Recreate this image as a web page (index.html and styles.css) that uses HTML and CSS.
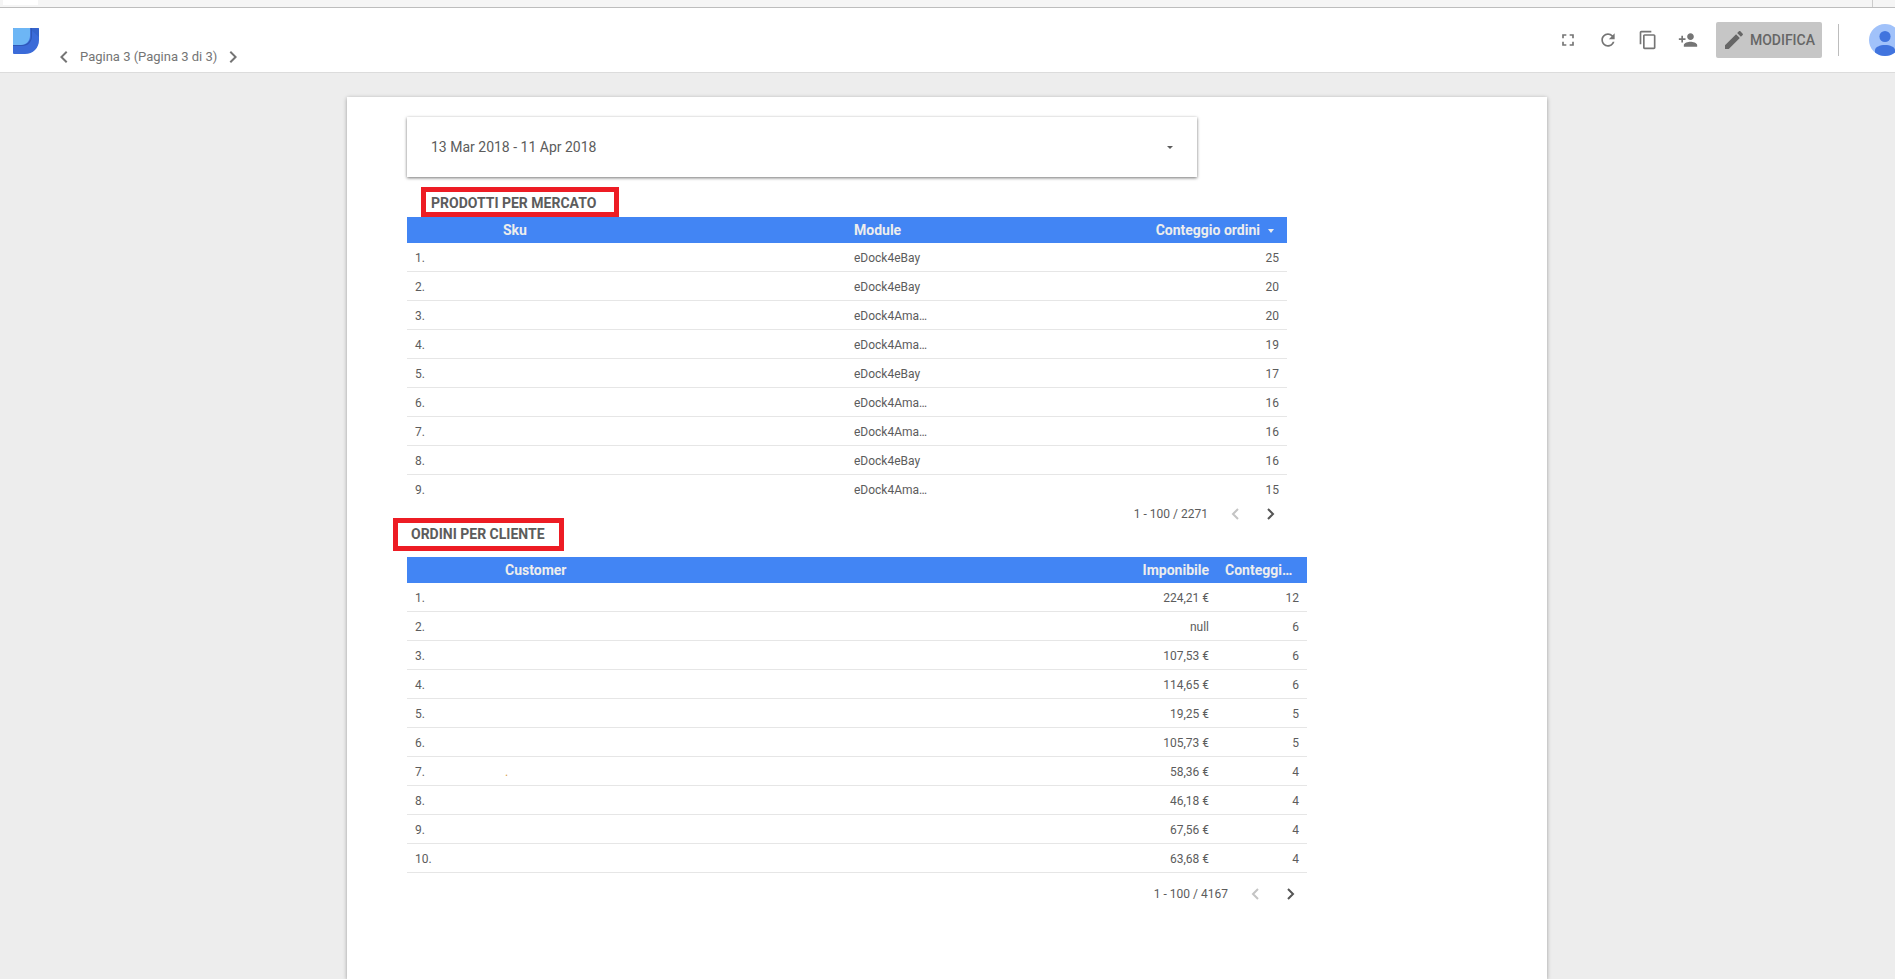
FILE: index.html
```html
<!DOCTYPE html>
<html lang="it">
<head>
<meta charset="utf-8">
<title>Report - Pagina 3</title>
<link rel="stylesheet" href="styles.css">
</head>
<body>
<div class="app">
  <div class="tab-strip"><span class="tab-strip-active"></span><span class="tab-strip-end"></span></div>
  <header class="header">
    <svg class="logo" viewBox="0 0 26 26" aria-hidden="true">
      <path d="M1 0h24a1 1 0 0 1 1 1v11c0 8-6 14-14 14H1a1 1 0 0 1-1-1V1a1 1 0 0 1 1-1z" fill="#3b6bd8"/>
      <path d="M17 1l9 8V1a1 1 0 0 0-1-1h-8z" fill="#3564cc"/>
      <path d="M0 17h9c5 0 9-4 9-9V0h1v8c0 6-4 10-10 10H0z" fill="#2f57b8"/>
      <path d="M1 0h16v8c0 5-4 9-9 9H0V1a1 1 0 0 1 1-1z" fill="#6db6f5"/>
    </svg>
    <nav class="page-nav" aria-label="Pagine">
      <button class="nav-button" type="button" aria-label="Pagina precedente"><svg class="icon" viewBox="0 0 24 24"><path d="M15.41 7.41L14 6l-6 6 6 6 1.410-1.410L10.830 12z"/></svg></button>
      <span>Pagina 3 (Pagina 3 di 3)</span>
      <button class="nav-button" type="button" aria-label="Pagina successiva"><svg class="icon" viewBox="0 0 24 24"><path d="M10 6L8.590 7.410 13.170 12l-4.580 4.590L10 18l6-6z"/></svg></button>
    </nav>
    <div class="toolbar">
      <button class="tool" type="button" aria-label="Schermo intero"><svg class="icon" viewBox="0 0 24 24"><path d="M7 14H5v5h5v-2H7v-3zm-2-4h2V7h3V5H5v5zm12 7h-3v2h5v-5h-2v3zM14 5v2h3v3h2V5h-5z"/></svg></button>
      <button class="tool" type="button" aria-label="Aggiorna"><svg class="icon" viewBox="0 0 24 24"><path d="M17.650 6.350C16.200 4.900 14.210 4 12 4c-4.420 0-7.990 3.580-7.990 8s3.570 8 7.990 8c3.730 0 6.840-2.550 7.730-6h-2.080c-.82 2.330-3.040 4-5.650 4-3.310 0-6-2.690-6-6s2.690-6 6-6c1.660 0 3.140.69 4.220 1.780L13 11h7V4l-2.350 2.350z"/></svg></button>
      <button class="tool" type="button" aria-label="Crea copia"><svg class="icon" viewBox="0 0 24 24"><path d="M16 1H4c-1.100 0-2 .9-2 2v14h2V3h12V1zm3 4H8c-1.100 0-2 .9-2 2v14c0 1.100.9 2 2 2h11c1.100 0 2-.9 2-2V7c0-1.100-.9-2-2-2zm0 16H8V7h11v14z"/></svg></button>
      <button class="tool" type="button" aria-label="Condividi"><svg class="icon" viewBox="0 0 24 24"><path d="M15 12c2.210 0 4-1.790 4-4s-1.790-4-4-4-4 1.790-4 4 1.790 4 4 4zm-9-2V7H4v3H1v2h3v3h2v-3h3v-2H6zm9 4c-2.670 0-8 1.340-8 4v2h16v-2c0-2.660-5.330-4-8-4z"/></svg></button>
      <button class="edit-button" type="button"><svg class="icon-large" viewBox="0 0 24 24"><path d="M3 17.250V21h3.750L17.810 9.940l-3.750-3.750L3 17.250zM20.710 7.040c.39-.39.39-1.020 0-1.410l-2.340-2.340c-.39-.39-1.020-.39-1.410 0l-1.830 1.830 3.750 3.750 1.830-1.830z"/></svg>MODIFICA</button>
      <span class="divider"></span>
      <svg class="avatar" viewBox="0 0 32 32" role="img" aria-label="Account">
        <circle cx="16" cy="16" r="16" fill="#a1c2fa"/>
        <circle cx="16" cy="12.500" r="5.600" fill="#4174de"/>
        <path d="M6 28.500V26c0-3 5-5 10-5s10 2 10 5v2.500C23 31 19.500 32 16 32S9 31 6 28.500z" fill="#4174de"/>
      </svg>
    </div>
  </header>

  <main class="stage">
    <article class="sheet">
      <button class="date-range" type="button"><span>13 Mar 2018 - 11 Apr 2018</span><svg class="date-caret" viewBox="0 0 6 3"><path d="M0 0h6L3 3z"/></svg></button>

      <section class="products">
        <h2 class="title title-products">PRODOTTI PER MERCATO</h2>
        <div class="table-clip">
          <table class="data">
            <colgroup><col class="col-index"><col class="col-sku"><col class="col-module"><col></colgroup>
            <thead><tr><th></th><th>Sku</th><th>Module</th><th class="num">Conteggio ordini<svg class="sort-caret" viewBox="0 0 6 4"><path d="M0 0h6L3 4z"/></svg></th></tr></thead>
            <tbody>
              <tr><td>1.</td><td></td><td>eDock4eBay</td><td class="num">25</td></tr>
              <tr><td>2.</td><td></td><td>eDock4eBay</td><td class="num">20</td></tr>
              <tr><td>3.</td><td></td><td>eDock4Ama…</td><td class="num">20</td></tr>
              <tr><td>4.</td><td></td><td>eDock4Ama…</td><td class="num">19</td></tr>
              <tr><td>5.</td><td></td><td>eDock4eBay</td><td class="num">17</td></tr>
              <tr><td>6.</td><td></td><td>eDock4Ama…</td><td class="num">16</td></tr>
              <tr><td>7.</td><td></td><td>eDock4Ama…</td><td class="num">16</td></tr>
              <tr><td>8.</td><td></td><td>eDock4eBay</td><td class="num">16</td></tr>
              <tr><td>9.</td><td></td><td>eDock4Ama…</td><td class="num">15</td></tr>
            </tbody>
          </table>
        </div>
        <div class="pager">
          <span>1 - 100 / 2271</span>
          <button class="pager-button" type="button" aria-label="Precedente" disabled><svg viewBox="0 0 8 12"><path d="M7 1L2 6l5 5"/></svg></button>
          <button class="pager-button" type="button" aria-label="Successivo"><svg viewBox="0 0 8 12"><path d="M1 1l5 5-5 5"/></svg></button>
        </div>
      </section>

      <section class="orders">
        <h2 class="title title-orders">ORDINI PER CLIENTE</h2>
        <table class="data">
          <colgroup><col class="col-index-wide"><col><col class="col-amount"><col class="col-count"></colgroup>
          <thead><tr><th></th><th>Customer</th><th class="num">Imponibile</th><th>Conteggi…</th></tr></thead>
          <tbody>
            <tr><td>1.</td><td></td><td class="num">224,21 €</td><td class="num">12</td></tr>
            <tr><td>2.</td><td></td><td class="num">null</td><td class="num">6</td></tr>
            <tr><td>3.</td><td></td><td class="num">107,53 €</td><td class="num">6</td></tr>
            <tr><td>4.</td><td></td><td class="num">114,65 €</td><td class="num">6</td></tr>
            <tr><td>5.</td><td></td><td class="num">19,25 €</td><td class="num">5</td></tr>
            <tr><td>6.</td><td></td><td class="num">105,73 €</td><td class="num">5</td></tr>
            <tr><td>7.</td><td class="faint">.</td><td class="num">58,36 €</td><td class="num">4</td></tr>
            <tr><td>8.</td><td></td><td class="num">46,18 €</td><td class="num">4</td></tr>
            <tr><td>9.</td><td></td><td class="num">67,56 €</td><td class="num">4</td></tr>
            <tr><td>10.</td><td></td><td class="num">63,68 €</td><td class="num">4</td></tr>
          </tbody>
        </table>
        <div class="pager pager-spaced">
          <span>1 - 100 / 4167</span>
          <button class="pager-button" type="button" aria-label="Precedente" disabled><svg viewBox="0 0 8 12"><path d="M7 1L2 6l5 5"/></svg></button>
          <button class="pager-button" type="button" aria-label="Successivo"><svg viewBox="0 0 8 12"><path d="M1 1l5 5-5 5"/></svg></button>
        </div>
      </section>
    </article>
  </main>
</div>
</body>
</html>
```
FILE: styles.css
```css
* { box-sizing: border-box; }

body {
  margin: 0;
  background: #ededed;
  color: #5c5c5c;
  font-family: Roboto, "Liberation Sans", sans-serif;
  font-size: 12px;
}

button {
  display: flex;
  align-items: center;
  margin: 0;
  padding: 0;
  border: 0;
  background: none;
  color: inherit;
  font: inherit;
  cursor: pointer;
}

svg { display: block; flex: none; }

.app {
  display: flex;
  flex-direction: column;
  min-height: 100vh;
}

/* Browser edge above the app */
.tab-strip {
  display: flex;
  justify-content: space-between;
  height: 8px;
  padding: 0 22px 0 3px;
  background: #f5f5f5;
  border-bottom: 1px solid #bdbdbd;
}
.tab-strip-active { width: 35px; height: 5px; background: #fff; }
.tab-strip-end { width: 1px; background: #ccc; }

/* Header */
.header {
  display: flex;
  align-items: flex-start;
  height: 65px;
  padding-left: 13px;
  background: #fff;
  border-bottom: 1px solid #dcdcdc;
  color: #757575;
  overflow: hidden;
}
.logo { width: 26px; height: 26px; margin-top: 20px; }
.page-nav {
  display: flex;
  align-items: center;
  gap: 4px;
  margin: 39px 0 0 13px;
  font-size: 13px;
  line-height: 20px;
}
.icon { width: 20px; height: 20px; fill: currentColor; }
.nav-button .icon { width: 24px; height: 24px; margin: -2px 0; }
.icon-large { width: 24px; height: 24px; fill: currentColor; }

.toolbar {
  display: flex;
  align-items: center;
  height: 64px;
  margin: 0 -6px 0 auto;
}
.tool { justify-content: center; width: 40px; height: 40px; }
.edit-button {
  gap: 4px;
  height: 36px;
  margin-left: 8px;
  padding: 0 7px 0 6px;
  border-radius: 2px;
  background: #c6c6c6;
  color: #666;
  font-size: 14px;
  font-weight: 500;
}
.divider { width: 1px; height: 32px; margin: 0 30px 0 16px; background: #bdbdbd; }
.avatar { width: 32px; height: 32px; }

/* Report sheet */
.stage {
  display: flex;
  flex: 1;
  justify-content: center;
  padding: 24px 1px 0 0;
}
.sheet {
  width: 100%;
  max-width: 1200px;
  padding: 20px 60px;
  background: #fff;
  box-shadow: 0 1px 4px rgba(0, 0, 0, 0.35);
}

.date-range {
  justify-content: space-between;
  width: 100%;
  max-width: 790px;
  height: 60px;
  padding: 0 24px;
  background: #fff;
  box-shadow: 0 1px 3px rgba(0, 0, 0, 0.55);
  font-size: 14px;
}
.date-caret { width: 6px; height: 3px; fill: #5c5c5c; }

.title {
  width: fit-content;
  margin: 0;
  border: 5px solid #ed1c24;
  font-size: 14px;
  font-weight: 700;
  line-height: 20px;
}
.title-products { margin: 10px 0 0 14px; padding: 3px 18px 0 5px; line-height: 17px; }
.title-orders { margin: -10px 0 6px -14px; padding: 1px 14px 2px 13px; }

.products { max-width: 880px; }
.orders { max-width: 900px; }
.table-clip { max-height: 283px; overflow: hidden; }

.data {
  width: 100%;
  border-collapse: separate;
  border-spacing: 0;
  table-layout: fixed;
}
.data th {
  height: 26px;
  padding: 0 8px;
  background: #4285f4;
  color: #ededed;
  font-size: 14px;
  font-weight: 700;
  line-height: 26px;
  text-align: left;
  white-space: nowrap;
}
.data td {
  height: 29px;
  padding: 2px 8px 0;
  border-bottom: 1px solid #e6e6e6;
  line-height: 26px;
  white-space: nowrap;
}
.data .num { text-align: right; }
.data th.num:has(.sort-caret) { padding-right: 13px; }
.sort-caret {
  display: inline-block;
  width: 6px;
  height: 4px;
  margin-left: 8px;
  vertical-align: middle;
  fill: currentColor;
}
.col-index { width: 88px; }
.col-sku { width: 351px; }
.col-module { width: 92px; }
.col-index-wide { width: 90px; }
.col-amount { width: 120px; }
.col-count { width: 90px; }
.data .faint { color: #d9a04a; }

.pager {
  display: flex;
  align-items: center;
  justify-content: flex-end;
  height: 28px;
  padding-right: 2px;
}
.pager span { margin-right: 13px; }
.pager-spaced { margin-top: 7px; }
.pager-button { justify-content: center; width: 28px; height: 28px; }
.pager-button + .pager-button { margin-left: 8px; }
.pager-button svg {
  width: 8px;
  height: 12px;
  fill: none;
  stroke: #555;
  stroke-width: 2;
}
.pager-button:disabled svg { stroke: #c4c4c4; }
```
